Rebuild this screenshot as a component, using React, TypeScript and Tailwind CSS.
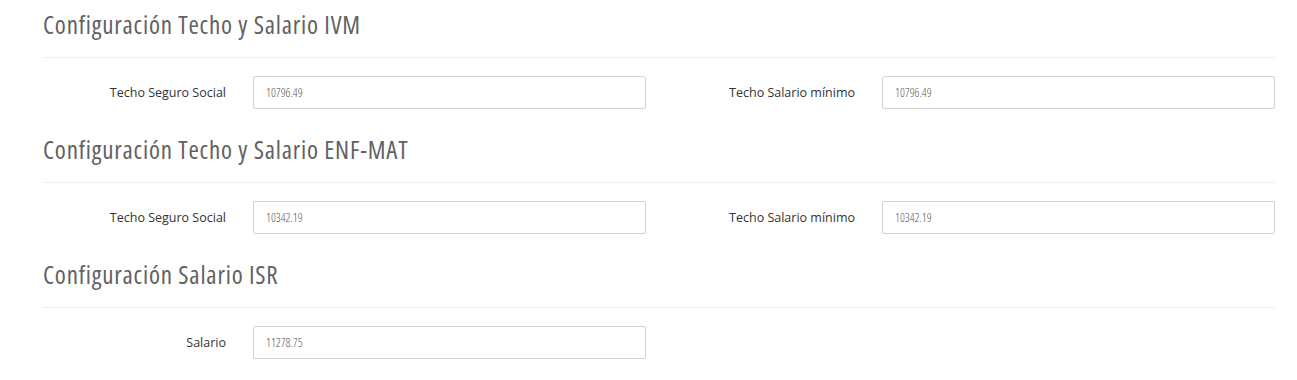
import React from "react";

type Field = { label: string; value: string };
type Section = { title: string; fields: Field[] };

const sections: Section[] = [
  {
    title: "Configuración Techo y Salario IVM",
    fields: [
      { label: "Techo Seguro Social", value: "10796.49" },
      { label: "Techo Salario mínimo", value: "10796.49" },
    ],
  },
  {
    title: "Configuración Techo y Salario ENF-MAT",
    fields: [
      { label: "Techo Seguro Social", value: "10342.19" },
      { label: "Techo Salario mínimo", value: "10342.19" },
    ],
  },
  {
    title: "Configuración Salario ISR",
    fields: [{ label: "Salario", value: "11278.75" }],
  },
];

function FieldRow({ field }: { field: Field }) {
  return (
    <div className="flex items-center w-[603px]">
      <label className="w-[183px] text-right text-[12.5px] text-[#333] font-['Open_Sans',sans-serif] leading-[17px]">
        {field.label}
      </label>
      <div className="ml-[27px] w-[393px] h-[33px] border border-[#d2d2d2] rounded-[2px] bg-white flex items-center pl-[12px] text-[12px] font-light font-stretch-[80%] text-[#555] font-['Open_Sans',sans-serif]">
        {field.value}
      </div>
    </div>
  );
}

export default function App() {
  return (
    <div className="w-[1297px] h-[380px] bg-white pl-[43px] pr-[22px] pt-[8px] font-['Open_Sans',sans-serif]">
      {sections.map((s, i) => (
        <div key={i} className={i > 0 ? "mt-[24px]" : ""}>
          <h3 className="text-[25px] leading-[33px] font-normal font-stretch-[80%] tracking-[0.8px] text-[#626262] font-['Open_Sans',sans-serif] mb-[16px]">
            {s.title}
          </h3>
          <div className="h-px bg-[#eeeeee]" />
          <div className="mt-[18px] flex gap-[26px]">
            {s.fields.map((f, j) => (
              <FieldRow key={j} field={f} />
            ))}
          </div>
        </div>
      ))}
    </div>
  );
}
